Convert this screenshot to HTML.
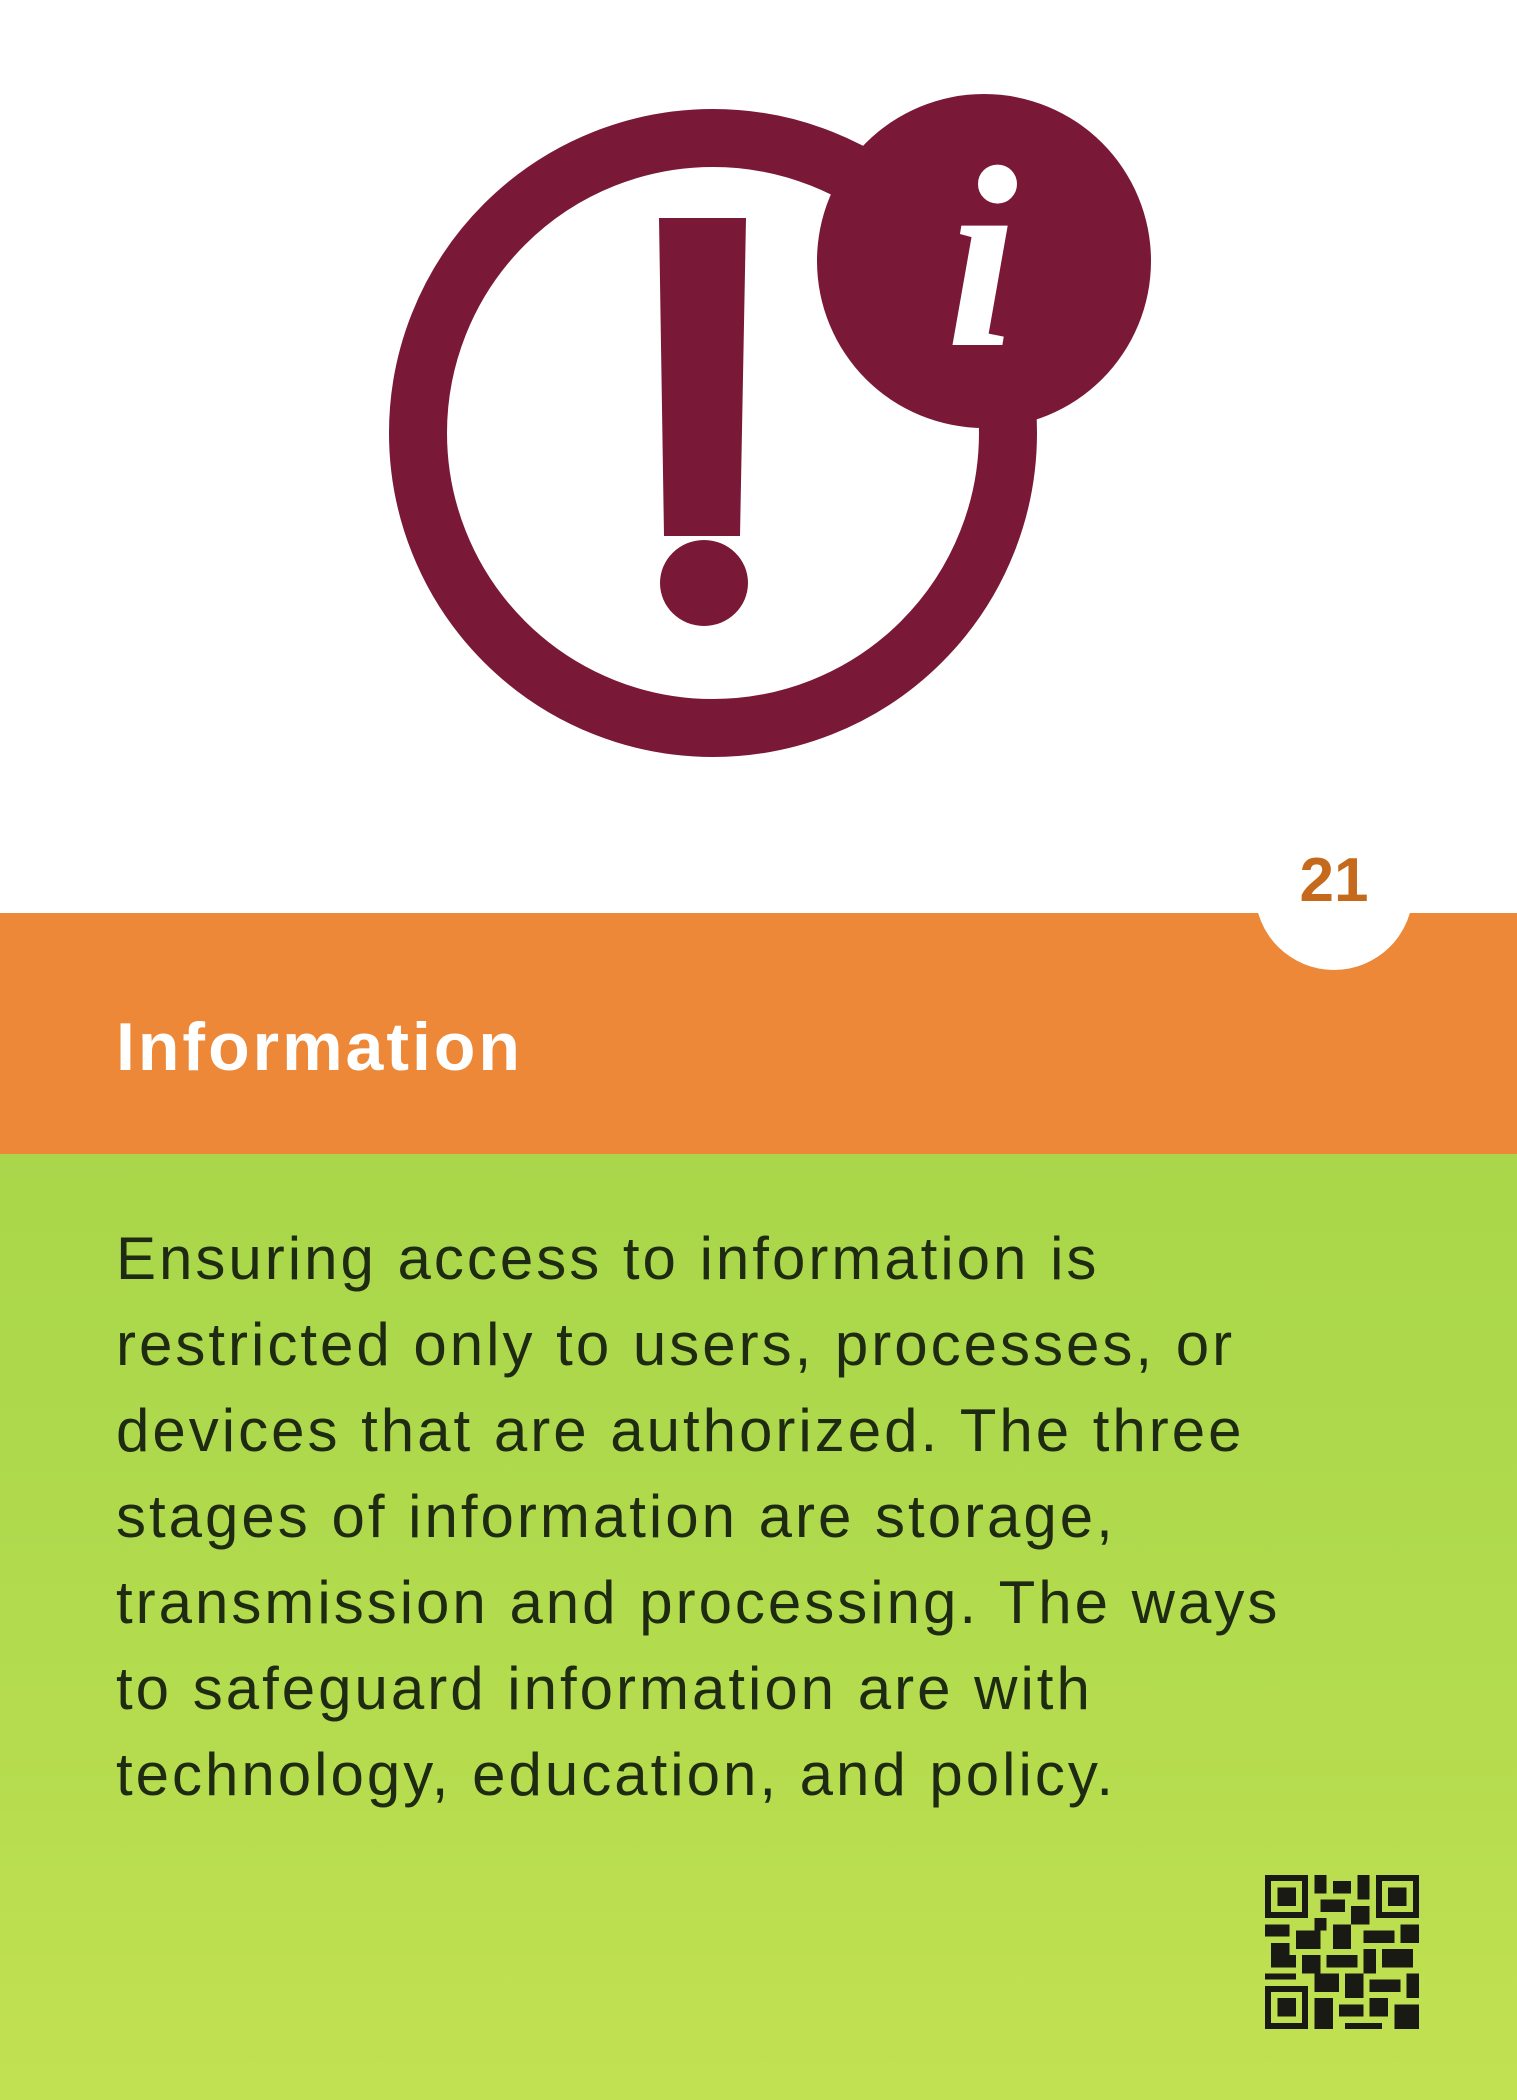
<!DOCTYPE html>
<html><head><meta charset="utf-8"><style>
html,body{margin:0;padding:0;}
body{width:1517px;height:2100px;position:relative;overflow:hidden;background:#fff;font-family:"Liberation Sans",sans-serif;}
#orange{position:absolute;left:0;top:913px;width:1517px;height:241px;background:#ec8838;}
#green{position:absolute;left:0;top:1154px;width:1517px;height:946px;background:linear-gradient(180deg,#a9d64a,#b4dc4e 60%,#c2e152);}
#num{position:absolute;left:1255px;top:812px;width:158px;height:158px;border-radius:50%;background:#fff;}
#numt{position:absolute;left:1255px;top:845px;width:158px;text-align:center;font-size:62px;color:#c56a1c;font-weight:bold;}
#title{position:absolute;left:116px;top:1008px;font-size:68px;font-weight:bold;color:#fff;letter-spacing:3px;}
#body{position:absolute;left:116px;top:1216px;font-size:60px;line-height:86px;letter-spacing:3px;word-spacing:1px;color:#1e2a12;white-space:pre;}
</style></head><body>
<svg width="1517" height="900" style="position:absolute;left:0;top:0">
<circle cx="713" cy="433" r="295" fill="none" stroke="#7a1838" stroke-width="58"/>
<circle cx="984" cy="261" r="167" fill="#7a1838"/>
<polygon points="659,218 746,218 740,536 664,536" fill="#7a1838"/>
<ellipse cx="704" cy="583" rx="44" ry="43" fill="#7a1838"/>
<text x="982" y="345" font-family="Liberation Serif" font-style="italic" font-weight="bold" font-size="260" fill="#fff" text-anchor="middle">i</text>
</svg>
<div id="orange"></div>
<div id="green"></div>
<div id="num"></div>
<div id="numt">21</div>
<div id="title">Information</div>
<div id="body">Ensuring access to information is
restricted only to users, processes, or
devices that are authorized. The three
stages of information are storage,
transmission and processing. The ways
to safeguard information are with
technology, education, and policy.</div>
<svg width="154" height="154" viewBox="0 0 25 25" style="position:absolute;left:1265px;top:1875px" shape-rendering="crispEdges">
<g fill="#1a1a14">
<path d="M0 0h7v7h-7zM1 1v5h5v-5zM2 2h3v3h-3z" fill-rule="evenodd"/>
<path d="M18 0h7v7h-7zM19 1v5h5v-5zM20 2h3v3h-3z" fill-rule="evenodd"/>
<path d="M0 18h7v7h-7zM1 19v5h5v-5zM2 20h3v3h-3z" fill-rule="evenodd"/>
<rect x="8" y="0" width="2" height="3"/><rect x="11" y="1" width="3" height="2"/><rect x="15" y="0" width="2" height="4"/>
<rect x="9" y="4" width="4" height="2"/><rect x="14" y="5" width="3" height="3"/><rect x="8" y="7" width="2" height="2"/>
<rect x="0" y="8" width="4" height="2"/><rect x="5" y="9" width="4" height="3"/><rect x="11" y="8" width="3" height="4"/>
<rect x="16" y="9" width="5" height="2"/><rect x="22" y="8" width="3" height="3"/><rect x="1" y="11" width="3" height="4"/>
<rect x="6" y="13" width="3" height="3"/><rect x="10" y="13" width="5" height="2"/><rect x="16" y="12" width="2" height="4"/>
<rect x="19" y="12" width="5" height="3"/><rect x="0" y="16" width="5" height="1"/><rect x="8" y="16" width="4" height="3"/>
<rect x="13" y="16" width="3" height="4"/><rect x="17" y="17" width="5" height="2"/><rect x="23" y="16" width="2" height="4"/>
<rect x="8" y="20" width="3" height="5"/><rect x="12" y="21" width="4" height="2"/><rect x="17" y="20" width="3" height="3"/>
<rect x="21" y="21" width="4" height="4"/><rect x="13" y="24" width="6" height="1"/><rect x="4" y="13" width="1" height="2"/>
</g></svg>
</body></html>
